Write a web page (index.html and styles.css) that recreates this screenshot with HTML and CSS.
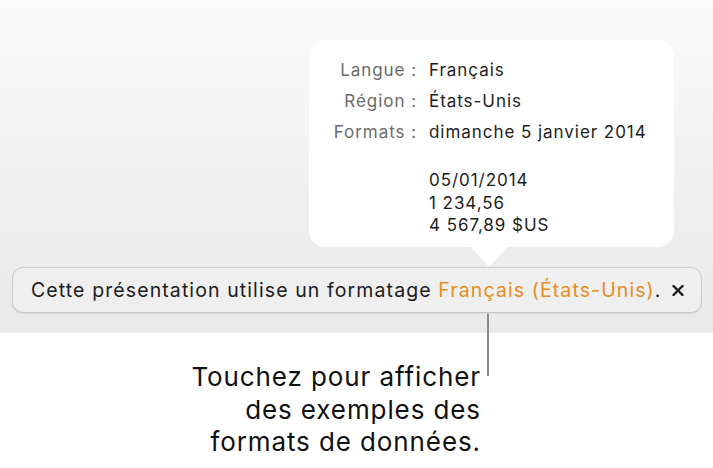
FILE: index.html
```html
<!DOCTYPE html>
<html lang="fr">
<head>
<meta charset="utf-8">
<link rel="stylesheet" href="styles.css">
</head>
<body>
<div class="stage">
  <div class="popover">
    <div class="row"><span class="label">Langue :</span><span class="value">Français</span></div>
    <div class="row"><span class="label">Région :</span><span class="value">États-Unis</span></div>
    <div class="row"><span class="label">Formats :</span><span class="value">dimanche 5 janvier 2014</span></div>
    <div class="samples">
      <div>05/01/2014</div>
      <div>1 234,56</div>
      <div>4 567,89 $US</div>
    </div>
  </div>
  <div class="banner">
    <span class="msg">Cette présentation utilise un formatage <span class="accent">Français (États-Unis)</span>.</span>
    <svg class="close" width="12" height="11" viewBox="0 0 12 11"><path d="M1.5 1 L10.5 10 M10.5 1 L1.5 10" stroke="#1b1b1b" stroke-width="2.4" stroke-linecap="round"/></svg>
  </div>
  <div class="callout-line"></div>
</div>
<div class="caption">
  <p>Touchez pour afficher<br>des exemples des<br>formats de données.</p>
</div>
</body>
</html>
```
FILE: styles.css
```css
html, body {
  margin: 0;
  padding: 0;
  background: #ffffff;
  font-family: Inter, Roboto, "Noto Sans", sans-serif;
  width: 713px;
  height: 468px;
  overflow: hidden;
}
.stage {
  position: relative;
  height: 333px;
  background: linear-gradient(to bottom, #fbfbfb 0%, #f1f1f1 50%, #e9e9e9 100%);
  padding-top: 267px;
  box-sizing: border-box;
}
.popover {
  position: absolute;
  left: 309px;
  top: 40px;
  width: 365px;
  height: 207px;
  background: #ffffff;
  border-radius: 16px;
  box-sizing: border-box;
  padding: 14px 0 0 0;
  color: #1d1d1d;
  font-size: 17px;
  letter-spacing: 0.95px;
}
.popover::after {
  content: "";
  position: absolute;
  left: 161px;
  top: 206px;
  width: 0;
  height: 0;
  border-left: 19px solid transparent;
  border-right: 19px solid transparent;
  border-top: 21px solid #ffffff;
}
.row {
  display: flex;
  height: 31px;
  align-items: center;
}
.label {
  width: 108px;
  text-align: right;
  color: #6b6b6b;
  padding-right: 12px;
}
.samples {
  margin-left: 120px;
  margin-top: 22px;
  line-height: 22.5px;
}
.banner {
  margin: 0 11px 0 12px;
  height: 46px;
  border: 1px solid #c9c9c9;
  border-radius: 11px;
  background: #efefef;
  box-shadow: 0 1px 1px rgba(0,0,0,0.08);
  box-sizing: border-box;
  display: flex;
  align-items: center;
  justify-content: space-between;
  padding: 0 17px 0 18px;
  font-size: 19.5px;
  letter-spacing: 1.1px;
  color: #1b1b1b;
}
.accent {
  color: #e58d22;
}
.close {
  display: block;
}
.callout-line {
  position: absolute;
  left: 487px;
  top: 314px;
  width: 2px;
  height: 62px;
  background: #8a8a8a;
}
.caption {
  width: 481px;
  text-align: right;
}
.caption p {
  margin: 0;
  padding-top: 28px;
  font-size: 26px;
  line-height: 32.5px;
  letter-spacing: 0.9px;
  color: #111;
}
```
